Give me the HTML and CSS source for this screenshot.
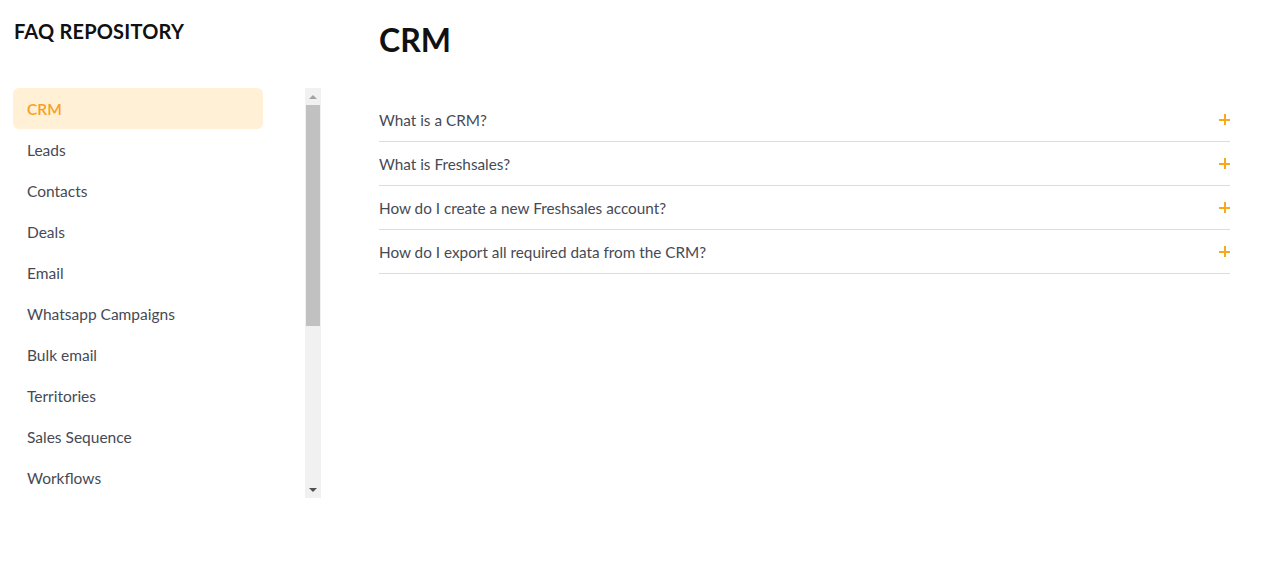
FILE: index.html
```html
<!DOCTYPE html>
<html lang="en">
<head>
<meta charset="utf-8">
<title>FAQ Repository</title>
<link rel="stylesheet" href="styles.css">
</head>
<body>
<div class="page">
  <aside class="sidebar">
    <h2 class="brand">FAQ REPOSITORY</h2>
    <div class="nav-wrap">
      <ul class="nav">
        <li class="nav-item active">CRM</li>
        <li class="nav-item">Leads</li>
        <li class="nav-item">Contacts</li>
        <li class="nav-item">Deals</li>
        <li class="nav-item">Email</li>
        <li class="nav-item">Whatsapp Campaigns</li>
        <li class="nav-item">Bulk email</li>
        <li class="nav-item">Territories</li>
        <li class="nav-item">Sales Sequence</li>
        <li class="nav-item">Workflows</li>
      </ul>
      <div class="scrollbar">
        <div class="sb-btn sb-up"><span class="tri-up"></span></div>
        <div class="sb-track"><div class="sb-thumb"></div></div>
        <div class="sb-btn sb-down"><span class="tri-down"></span></div>
      </div>
    </div>
  </aside>
  <main class="content">
    <h1 class="title">CRM</h1>
    <ul class="faq">
      <li class="faq-row"><span>What is a CRM?</span><span class="plus"></span></li>
      <li class="faq-row"><span>What is Freshsales?</span><span class="plus"></span></li>
      <li class="faq-row"><span>How do I create a new Freshsales account?</span><span class="plus"></span></li>
      <li class="faq-row"><span>How do I export all required data from the CRM?</span><span class="plus"></span></li>
    </ul>
  </main>
</div>
</body>
</html>
```

FILE: styles.css
```css
* { box-sizing: border-box; }
body {
  margin: 0;
  background: #fff;
  font-family: "Lato", "Open Sans", sans-serif;
  color: #444750;
}
ul { list-style: none; margin: 0; padding: 0; }
.page {
  display: flex;
  gap: 58px;
  padding: 0 50px 0 13px;
}
.sidebar {
  width: 308px;
  flex: none;
  padding-top: 19px;
}
.brand {
  margin: 0 0 0 1px;
  font-size: 20px;
  line-height: 24px;
  font-weight: 700;
  color: #111;
  letter-spacing: 0.2px;
}
.nav-wrap {
  margin-top: 45px;
  display: flex;
  justify-content: space-between;
  height: 410px;
}
.nav {
  width: 250px;
  overflow: hidden;
}
.nav-item {
  height: 41px;
  line-height: 39px;
  padding-top: 2px;
  padding-left: 14px;
  font-size: 15.5px;
  color: #464a55;
  border-radius: 6px;
}
.nav-item.active {
  background: #fff0d6;
  color: #f5a023;
  font-weight: 600;
}
.scrollbar {
  width: 16px;
  display: flex;
  flex-direction: column;
  background: #f1f1f1;
}
.sb-btn {
  height: 17px;
  display: flex;
  align-items: center;
  justify-content: center;
}
.sb-track { flex: 1; }
.sb-thumb {
  margin: 0 1px;
  height: 221px;
  background: #c1c1c1;
}
.tri-up {
  width: 0; height: 0;
  border-left: 4px solid transparent;
  border-right: 4px solid transparent;
  border-bottom: 4px solid #a3a3a3;
}
.tri-down {
  width: 0; height: 0;
  border-left: 4px solid transparent;
  border-right: 4px solid transparent;
  border-top: 4px solid #505050;
}
.content {
  flex: 1;
  padding-top: 20px;
}
.title {
  margin: 0;
  font-size: 32px;
  line-height: 40px;
  font-weight: 700;
  color: #111;
}
.faq { margin-top: 38px; }
.faq-row {
  height: 44px;
  display: flex;
  align-items: center;
  justify-content: space-between;
  border-bottom: 1px solid #dcdcdc;
  font-size: 15.3px;
  color: #464a55;
}
.plus {
  position: relative;
  width: 11px;
  height: 11px;
  margin-right: 0;
}
.plus::before, .plus::after {
  content: "";
  position: absolute;
  background: #f7a81b;
}
.plus::before { left: 0; right: 0; top: 5px; height: 2px; }
.plus::after { top: 0; bottom: 0; left: 5px; width: 2px; }
```
